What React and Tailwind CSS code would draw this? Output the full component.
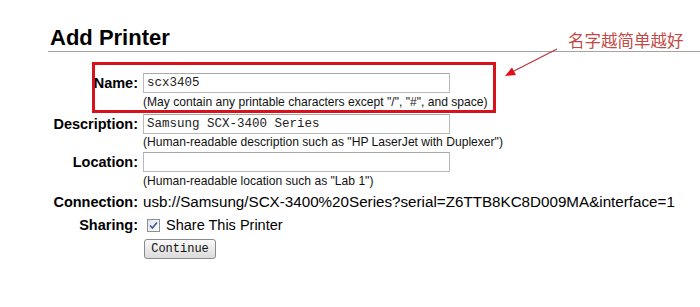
import React from 'react';

const Checkbox = () => (
    <svg width="13" height="13" viewBox="0 0 13 13" className="shrink-0">
        <defs>
            <linearGradient id="cb" x1="0" y1="0" x2="1" y2="1">
                <stop offset="0" stopColor="#dfe3ea" />
                <stop offset="1" stopColor="#ffffff" />
            </linearGradient>
        </defs>
        <rect x="0.5" y="0.5" width="12" height="12" fill="url(#cb)" stroke="#8e8f8f" />
        <path d="M3 6.5 L5.4 9 L10 3.5" fill="none" stroke="#3c5a9a" strokeWidth="1.6" />
    </svg>
);

const Field = ({ value }) => (
    <input
        readOnly
        value={value}
        className="block w-[307px] h-[20px] border border-[#b9b9b9] border-t-[#a8a8a8] bg-white pl-[3px] text-[12.5px] font-['Liberation_Mono',monospace] text-[#222] outline-none"
    />
);

const Help = ({ children, className = '' }) => (
    <div className={`text-[12.1px] leading-[15px] text-[#111] ${className}`}>{children}</div>
);

export default function App() {
    return (
        <div className="relative w-[700px] h-[307px] overflow-hidden bg-white text-black font-['Liberation_Sans',Arial,sans-serif]">
            <h1 className="ml-[48px] mt-[25px] pl-[2px] text-[22px] leading-[26px] font-bold border-b border-[#a3a3a3]">
                Add Printer
            </h1>

            <div className="ml-[48px]">
                <div className="flex mt-[21px]">
                    <div className="w-[90px] text-right font-bold text-[14.5px] leading-[20px]">Name:</div>
                    <div className="ml-[5px]">
                        <Field value="scx3405" />
                        <Help className="mt-[2px]">(May contain any printable characters except "/", "#", and space)</Help>
                    </div>
                </div>

                <div className="flex mt-[4px]">
                    <div className="w-[90px] text-right font-bold text-[14.5px] leading-[20px]">Description:</div>
                    <div className="ml-[5px]">
                        <Field value="Samsung SCX-3400 Series" />
                        <Help className="mt-[1px]">(Human-readable description such as "HP LaserJet with Duplexer")</Help>
                    </div>
                </div>

                <div className="flex mt-[2px]">
                    <div className="w-[90px] text-right font-bold text-[14.5px] leading-[20px]">Location:</div>
                    <div className="ml-[5px]">
                        <Field value="" />
                        <Help className="mt-[2px]">(Human-readable location such as "Lab 1")</Help>
                    </div>
                </div>

                <div className="flex mt-[3px] leading-[20px]">
                    <div className="w-[90px] text-right font-bold text-[14.5px]">Connection:</div>
                    <div className="ml-[5px] whitespace-nowrap text-[15.2px]">usb://Samsung/SCX-3400%20Series?serial=Z6TTB8KC8D009MA&amp;interface=1</div>
                </div>

                <div className="flex mt-[3px] text-[14.5px] leading-[20px]">
                    <div className="w-[90px] text-right font-bold">Sharing:</div>
                    <div className="ml-[9px] flex items-center gap-[6px]">
                        <Checkbox />
                        <span>Share This Printer</span>
                    </div>
                </div>

                <div className="flex mt-[4px]">
                    <div className="w-[90px]" />
                    <button className="ml-[6px] w-[72px] h-[20px] rounded-[3px] border border-[#8a8a8a] bg-gradient-to-b from-[#fafafa] to-[#dadada] text-[12px] leading-[18px] font-['Liberation_Mono',monospace] text-[#111]">
                        Continue
                    </button>
                </div>
            </div>

            {/* annotation */}
            <div className="absolute left-[92px] top-[62px] w-[404px] h-[51px] border-[3px] border-[#d8121b] pointer-events-none" />
            <div className="absolute left-[568px] top-[30px] text-[16.5px] leading-[20px] text-[#c24a45] font-['Noto_Sans_CJK_SC',sans-serif]">
                名字越简单越好
            </div>
            <svg className="absolute left-0 top-0 pointer-events-none" width="700" height="307">
                <line x1="557" y1="49" x2="512" y2="72" stroke="#b5343a" strokeWidth="1.2" />
                <polygon points="505,76 516,75 512,67.5" fill="#e0101b" />
            </svg>
        </div>
    );
}
